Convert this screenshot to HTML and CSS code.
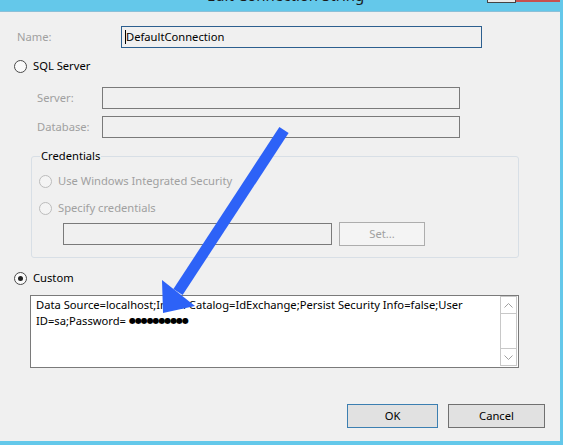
FILE: index.html
```html
<!doctype html>
<html>
 <head>
	<meta charset="UTF-8">
	<title>Edit Connection String</title>
	<link rel="stylesheet" href="styles.css">
 </head>
 <body>
	<div class="window">
		<div class="titlebar">
			<span class="title">Edit Connection String</span>
			<span class="ctl ctl_min"></span>
			<span class="ctl ctl_close"></span>
		</div>
		<div class="dialog">
			<div class="name_row">
				<span class="label dim">Name:</span>
				<div class="field field_focus"><span class="caret"></span>DefaultConnection</div>
			</div>
			<div class="radio sql_radio">
				<span class="circle"></span>SQL Server
			</div>
			<div class="server_grid">
				<span class="label dim">Server:</span>
				<div class="field"></div>
				<span class="label dim">Database:</span>
				<div class="field"></div>
			</div>
			<div class="group">
				<span class="legend">Credentials</span>
				<div class="radio off">
					<span class="circle"></span>Use Windows Integrated Security
				</div>
				<div class="radio off second">
					<span class="circle"></span>Specify credentials
				</div>
				<div class="cred_row">
					<div class="field cred_field"></div>
					<div class="btn btn_off">Set...</div>
				</div>
			</div>
			<div class="radio custom_radio">
				<span class="circle checked"></span>Custom
			</div>
			<div class="textbox">
				<div class="text">Data Source=localhost;Initial Catalog=IdExchange;Persist Security Info=false;User ID=sa;Password=<span class="dots">●●●●●●●●●●</span></div>
				<div class="scroll">
					<div class="arrow_box">
						<svg width="9" height="5" viewBox="0 0 9 5"><polyline points="0.5,4.5 4.5,0.5 8.5,4.5" fill="none" stroke="#a0a0a0"/></svg>
					</div>
					<div class="track"></div>
					<div class="arrow_box">
						<svg width="9" height="5" viewBox="0 0 9 5"><polyline points="0.5,0.5 4.5,4.5 8.5,0.5" fill="none" stroke="#a0a0a0"/></svg>
					</div>
				</div>
			</div>
			<div class="buttons">
				<div class="btn btn_default">OK</div>
				<div class="btn">Cancel</div>
			</div>
		</div>
	</div>
	<!-- annotation arrow drawn over the dialog -->
	<svg class="pointer" width="563" height="445" viewBox="0 0 563 445">
		<line x1="284" y1="130" x2="178" y2="292" stroke="#2d62f7" stroke-width="11"/>
		<polygon points="163,313 162,280 195,306" fill="#2d62f7"/>
	</svg>
 </body>
</html>
```

FILE: styles.css
```css
body{
	margin:0;
	width:563px;height:445px;
	overflow:hidden;
	background:#64c8ea;
	position:relative;
	font-family:"Segoe UI","Noto Sans",sans-serif;
	font-size:11.2px;
	color:#000;
}
.window{width:560px}
/*title bar, mostly cut off at the top*/
.titlebar{
	height:11px;
	display:flex;
	overflow:hidden;
}
.title{
	margin-left:207px;
	margin-top:-15px;
	font-size:15px;
	line-height:20px;
	color:#1a1a1a;
}
.ctl{height:2px}
.ctl_min{
	margin-left:auto;
	width:27px;
	background:#e8e8e8;
	border:1px solid #444;
	border-top:0;
}
.ctl_close{width:44px;background:#c75050}

.dialog{
	background:#f0f0f0;
	border-top:1px solid #8cc0d8;
	padding-top:14px;
	box-sizing:border-box;
	height:430px;
}
.label{line-height:16px}
.dim{color:#a0a0a0}
.field{
	box-sizing:border-box;
	height:22px;
	border:1px solid #7a7a7a;
	background:#f0f0f0;
	line-height:20px;
	padding-left:3px;
}
.name_row{
	display:flex;
	align-items:center;
	padding-left:17px;
}
.name_row .label{width:104px}
.field_focus{
	width:361px;
	border-color:#2c5f8f;
	display:flex;
	align-items:center;
}
.caret{
	width:1px;height:14px;
	background:#000;
}
/*radio buttons*/
.radio{
	display:flex;
	align-items:center;
	height:16px;
	line-height:16px;
}
.circle{
	box-sizing:border-box;
	width:13px;height:13px;
	border:1px solid #4a4a4a;
	border-radius:50%;
	background:#fafafa;
	margin-right:6px;
	display:flex;
	align-items:center;
	justify-content:center;
}
.checked::after{
	content:"";
	width:5px;height:5px;
	border-radius:50%;
	background:#222;
}
.off{color:#a0a0a0}
.off .circle{border-color:#bcbcbc;background:#f4f4f4}
.sql_radio{margin-top:10px;padding-left:14px}
.server_grid{
	margin-top:13px;
	padding-left:37px;
	display:grid;
	grid-template-columns:65px 358px;
	row-gap:7px;
	align-items:center;
}
/*Credentials group box*/
.group{
	margin:18px 0 0 31px;
	width:488px;height:102px;
	box-sizing:border-box;
	border:1px solid #d8dfe6;
	border-radius:3px;
	padding:16px 0 0 7px;
}
.legend{
	display:block;
	width:max-content;
	margin:-25px 0 9px 1px;
	padding:0 1px;
	background:#f0f0f0;
	line-height:16px;
}
.group .second{margin-top:11px}
.cred_row{
	display:flex;
	align-items:center;
	margin-top:6px;
	padding-left:24px;
}
.cred_field{width:269px}
.btn{
	box-sizing:border-box;
	height:24px;
	border:1px solid #707070;
	background:#e1e1e1;
	text-align:center;
	line-height:22px;
}
.btn_off{
	margin-left:7px;
	width:86px;
	border-color:#adadad;
	background:#f4f4f4;
	color:#a0a0a0;
}
.custom_radio{margin-top:12px;padding-left:14px}
/*connection string text box*/
.textbox{
	margin:9px 0 0 30px;
	width:489px;height:73px;
	box-sizing:border-box;
	border:1px solid #7a7a7a;
	background:#fff;
	display:flex;
}
.text{
	flex:1;
	padding:1px 0 0 5px;
	line-height:16px;
}
.dots{
	font-family:"DejaVu Sans",sans-serif;
	font-size:8px;
	letter-spacing:-1.1px;
	margin-left:3px;
	vertical-align:2px;
}
.scroll{
	width:17px;
	margin:0 1px 1px 0;
	box-sizing:border-box;
	border:1px solid #c8c8c8;
	display:flex;
	flex-direction:column;
}
.arrow_box{
	height:16px;
	display:flex;
	align-items:center;
	justify-content:center;
}
.arrow_box:first-child{border-bottom:1px solid #c8c8c8}
.arrow_box:last-child{border-top:1px solid #c8c8c8}
.track{flex:1}
.buttons{
	display:flex;
	justify-content:flex-end;
	gap:10px;
	margin-top:36px;
	padding-right:15px;
}
.buttons .btn:first-child{width:91px}
.buttons .btn:last-child{width:97px}
.btn_default{border-color:#3c7fb1}
.pointer{
	position:absolute;
	left:0;top:0;
}
```
